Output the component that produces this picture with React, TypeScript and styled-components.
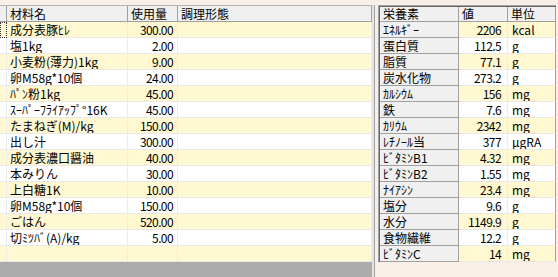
import React from 'react';
import styled, { createGlobalStyle } from 'styled-components';

type Ingredient = { name: string; amount: string };
type Nutrient = { name: string; value: string; unit: string };

const ingredients: Ingredient[] = [
  { name: '成分表豚ﾋﾚ', amount: '300.00' },
  { name: '塩1kg', amount: '2.00' },
  { name: '小麦粉(薄力)1kg', amount: '9.00' },
  { name: '卵M58g*10個', amount: '24.00' },
  { name: 'ﾊﾟﾝ粉1kg', amount: '45.00' },
  { name: 'ｽｰﾊﾟｰﾌﾗｲｱｯﾌﾟ°16K', amount: '45.00' },
  { name: 'たまねぎ(M)/kg', amount: '150.00' },
  { name: '出し汁', amount: '300.00' },
  { name: '成分表濃口醤油', amount: '40.00' },
  { name: '本みりん', amount: '30.00' },
  { name: '上白糖1K', amount: '10.00' },
  { name: '卵M58g*10個', amount: '150.00' },
  { name: 'ごはん', amount: '520.00' },
  { name: '切ﾐﾂﾊﾞ(A)/kg', amount: '5.00' },
  { name: '', amount: '' },
];

const nutrients: Nutrient[] = [
  { name: 'ｴﾈﾙｷﾞｰ', value: '2206', unit: 'kcal' },
  { name: '蛋白質', value: '112.5', unit: 'g' },
  { name: '脂質', value: '77.1', unit: 'g' },
  { name: '炭水化物', value: '273.2', unit: 'g' },
  { name: 'ｶﾙｼｳﾑ', value: '156', unit: 'mg' },
  { name: '鉄', value: '7.6', unit: 'mg' },
  { name: 'ｶﾘｳﾑ', value: '2342', unit: 'mg' },
  { name: 'ﾚﾁﾉｰﾙ当', value: '377', unit: 'μgRA' },
  { name: 'ﾋﾞﾀﾐﾝB1', value: '4.32', unit: 'mg' },
  { name: 'ﾋﾞﾀﾐﾝB2', value: '1.55', unit: 'mg' },
  { name: 'ﾅｲｱｼﾝ', value: '23.4', unit: 'mg' },
  { name: '塩分', value: '9.6', unit: 'g' },
  { name: '水分', value: '1149.9', unit: 'g' },
  { name: '食物繊維', value: '12.2', unit: 'g' },
  { name: 'ﾋﾞﾀﾐﾝC', value: '14', unit: 'mg' },
];

const GlobalStyle = createGlobalStyle`
  html, body {
    margin: 0;
    background: #f9efe6;
  }
  body {
    font-family: "Noto Sans CJK JP", "Noto Sans", sans-serif;
    font-size: 12px;
    color: #000;
  }
`;

const Screen = styled.div`
  display: flex;
  gap: 4px;
  height: 277px;
  padding-top: 5px;
  box-sizing: border-box;
  overflow: hidden;
`;

const LeftPane = styled.div`
  width: 372px;
  display: flex;
  flex-direction: column;
  background: #ababab;
  border-right: 2px solid #e4e4e4;
  box-shadow: 1px 0 0 #a0a0a0;
`;

const recipeCols = '7px 121px 50px 194px';
const nutrientCols = '79px 49px 48px';

const GridRow = styled.div<{ $cols: string; $odd?: boolean }>`
  display: grid;
  grid-template-columns: ${(p) => p.$cols};
  background: ${(p) => (p.$odd ? '#fff8d0' : '#ffffff')};
`;

const HeadRow = styled(GridRow)<{ $top?: boolean }>`
  background: #f0f0f0;
  border-top: ${(p) => (p.$top ? '1px solid #b4b4b4' : 'none')};
`;

const Cell = styled.div<{ $align?: 'left' | 'right' }>`
  height: 15px;
  line-height: 15px;
  border-right: 1px solid #ececec;
  border-bottom: 1px solid #e8e8e8;
  padding: ${(p) => (p.$align === 'right' ? '0 4px 0 0' : '0 0 0 3px')};
  text-align: ${(p) => p.$align ?? 'left'};
  white-space: nowrap;
  overflow: hidden;
`;

const HeadCell = styled(Cell)<{ $short?: boolean }>`
  height: ${(p) => (p.$short ? '14px' : '15px')};
  line-height: ${(p) => (p.$short ? '14px' : '15px')};
  overflow: visible;
  border-right-color: #a0a0a0;
  border-bottom-color: #a0a0a0;
`;

const Number = styled.span`
  letter-spacing: -0.6px;
`;

const Selector = styled.div<{ $focus?: boolean }>`
  height: 15px;
  border-right: 1px solid #ececec;
  border-bottom: 1px solid #e8e8e8;
  outline: ${(p) => (p.$focus ? '1px dotted #333' : 'none')};
  outline-offset: -1px;
`;

const RightPane = styled.div`
  align-self: flex-start;
  display: flex;
  flex-direction: column;
  border-top: 1px solid #a0a0a0;
  border-left: 1px solid #a0a0a0;
  box-shadow: inset 1px 1px 0 #696969;
  padding: 1px 0 0 1px;
`;

const NameCell = styled(Cell)`
  background: #f0f0f0;
  border-right-color: #a0a0a0;
  border-bottom-color: #a0a0a0;
`;

const ValueCell = styled(Cell)`
  padding-right: 6px;
`;

const UnitCell = styled(Cell)`
  padding-left: 4px;
  border-right-color: #a0a0a0;
`;

const RecipeGrid: React.FC = () => (
  <LeftPane>
    <HeadRow $cols={recipeCols} $top>
      <HeadCell />
      <HeadCell>材料名</HeadCell>
      <HeadCell>使用量</HeadCell>
      <HeadCell>調理形態</HeadCell>
    </HeadRow>
    {ingredients.map((item, i) => (
      <GridRow key={i} $cols={recipeCols} $odd={i % 2 === 0}>
        <Selector $focus={i === 0} />
        <Cell>{item.name}</Cell>
        <Cell $align="right">
          <Number>{item.amount}</Number>
        </Cell>
        <Cell />
      </GridRow>
    ))}
  </LeftPane>
);

const NutrientGrid: React.FC = () => (
  <RightPane>
    <HeadRow $cols={nutrientCols}>
      <HeadCell $short>栄養素</HeadCell>
      <HeadCell $short>値</HeadCell>
      <HeadCell $short>単位</HeadCell>
    </HeadRow>
    {nutrients.map((n, i) => (
      <GridRow key={n.name} $cols={nutrientCols} $odd={i % 2 === 0}>
        <NameCell>{n.name}</NameCell>
        <ValueCell $align="right">
          <Number>{n.value}</Number>
        </ValueCell>
        <UnitCell>{n.unit}</UnitCell>
      </GridRow>
    ))}
  </RightPane>
);

const App: React.FC = () => (
  <>
    <GlobalStyle />
    <Screen>
      <RecipeGrid />
      <NutrientGrid />
    </Screen>
  </>
);

export default App;
